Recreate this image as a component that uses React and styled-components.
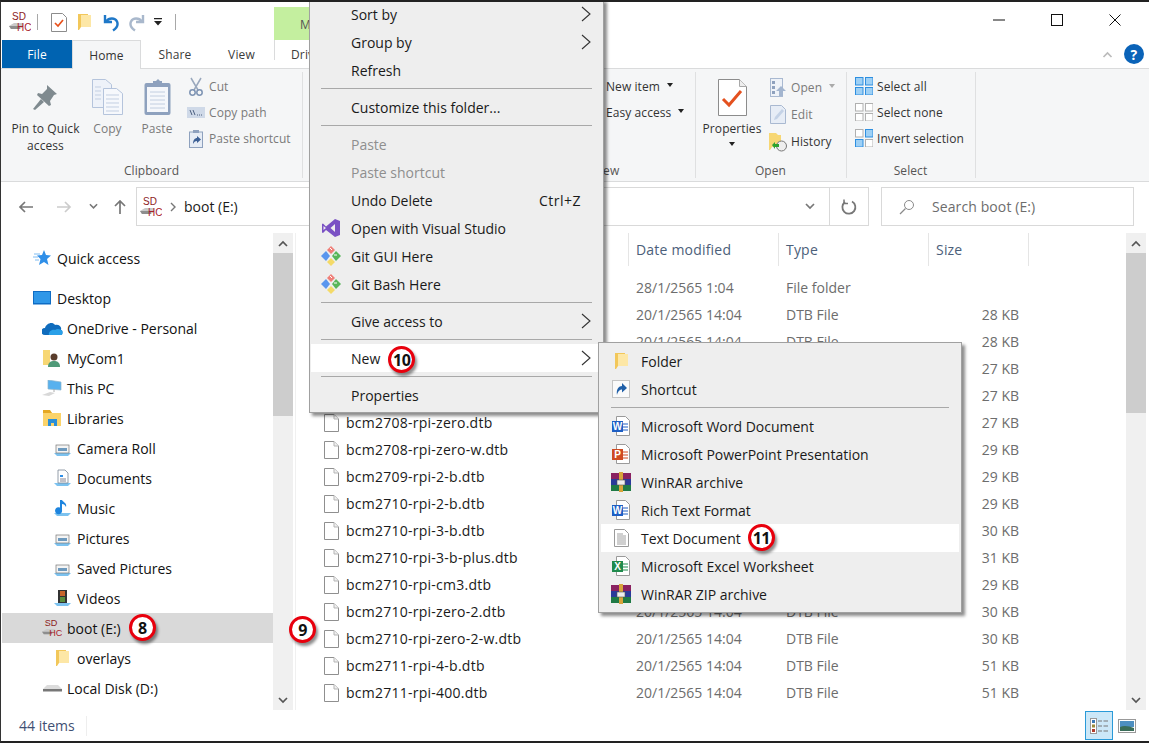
import React from "react";
import styled, { createGlobalStyle } from "styled-components";

const Global = createGlobalStyle`
  html, body { margin: 0; padding: 0; background: #fff; }
  body { font-family: "Open Sans", "Noto Sans", sans-serif; overflow: hidden; }
`;
const Window = styled.div`
  position: relative; width: 1149px; height: 743px; box-sizing: border-box; overflow: hidden;
  border-top: 2px solid #222; border-bottom: 2px solid #222; border-left: 1px solid #333;
  display: flex; flex-direction: column; background: #fff; color: #1a1a1a;
`;
const TitleBar = styled.div`height: 38px; display: flex; align-items: stretch; flex: none;`;
const Qat = styled.div`width: 273px; display: flex; align-items: center; padding: 2px 0 0 8px; box-sizing: border-box; gap: 0;`;
const QatSlot = styled.span`display: inline-flex; justify-content: center; width: ${p => p.$w}px; margin-left: ${p => p.$ml || 0}px;`;
const QatSep = styled.span`width: 1px; height: 16px; background: #a8a8a8; margin-left: ${p => p.$ml}px;`;
const ContextTab = styled.div`
  width: 70px; margin-top: 5px; background: #c4ef9f; font-size: 12px; color: #555; padding: 9px 0 0 26px; box-sizing: border-box;
`;
const WinButtons = styled.div`margin-left: auto; display: flex; margin-right: 5px;`;
const WinButton = styled.div`width: 58px; height: 36px; display: flex; align-items: center; justify-content: center;`;
const TabBar = styled.div`
  height: 28px; flex: none; display: flex; align-items: stretch; border-bottom: 1px solid #dadbdc; padding-left: 1px; box-sizing: content-box; font-size: 12px; letter-spacing: .15px;
`;
const FileTab = styled.div`width: 70px; background: #0063b1; color: #fff; display: flex; align-items: center; justify-content: center;`;
const Tab = styled.div`
  width: ${p => p.$w}px; display: flex; align-items: center; justify-content: center; color: #3b3b3b; box-sizing: border-box;
  ${p => p.$active && `background:#f5f6f7; border:1px solid #dadbdc; border-bottom:none; height:29px; color:#333;`}
`;
const DriveTab = styled.div`width: 70px; border-left: 1px solid #dadbdc; margin: 0 0 8px; padding: 6px 0 0 16px; box-sizing: border-box; color: #3b3b3b;`;
const TabRight = styled.div`margin-left: auto; display: flex; align-items: center; gap: 10px; margin-right: 5px;`;
const Help = styled.div`
  width: 20px; height: 20px; border-radius: 50%; background: #0a63b8; color: #fff; font-weight: 700; font-size: 14px; display: flex; align-items: center; justify-content: center;
`;
const Ribbon = styled.div`
  height: 112px; flex: none; display: flex; background: #f5f6f7; border-bottom: 1px solid #dadbdc; font-size: 12px; letter-spacing: .08px; color: #3b3b3b; padding-left: 1px;
`;
const Group = styled.div`
  width: ${p => p.$w}px; position: relative; display: flex; flex-direction: column; box-sizing: border-box; flex: none;
  &::after{content:"";position:absolute;right:0;top:3px;bottom:3px;width:1px;background:#dfe0e1;}
`;
const GroupBody = styled.div`flex: 1; display: flex; padding-left: ${p => p.$pl || 0}px;`;
const GroupLabel = styled.div`
  height: 21px; line-height: 22px; color: #555; text-align: ${p => p.$pl ? "left" : "center"}; padding-left: ${p => p.$pl || 0}px; padding-right: ${p => p.$pl ? 0 : 2}px;
`;
const BigButton = styled.div`
  width: ${p => p.$w}px; padding-top: 7px; display: flex; flex-direction: column; align-items: center; text-align: center; line-height: 17px; flex: none;
  color: ${p => p.$dim ? "#7a7a7a" : "#333"};
`;
const BigIcon = styled.div`height: 44px; margin-top: -1px; margin-bottom: 1px; display: flex; align-items: center; justify-content: center;`;
const Caret = styled.span`
  display: inline-block; width: 0; height: 0; border-left: 3.5px solid transparent; border-right: 3.5px solid transparent; border-top: 4px solid ${p => p.$c || "#222"};
`;
const CaretRow = styled.div`height: 13px; display: flex; align-items: center;`;
const SmallList = styled.div`display: flex; flex-direction: column; padding-top: ${p => p.$top ?? 4}px; margin-left: ${p => p.$ml || 0}px;`;
const SmallItem = styled.div`
  height: ${p => p.$h || 26}px; display: flex; align-items: center; gap: 4px; white-space: nowrap; color: ${p => p.$dim ? "#7a7a7a" : "#333"};
`;
const SmallIcon = styled.span`width: 18px; display: inline-flex; justify-content: center; flex: none;`;
const CaretGap = styled.span`margin-left: 3px; display: inline-flex; margin-top: -3px;`;
const AddressRow = styled.div`height: 51px; box-sizing: border-box; flex: none; display: flex; align-items: center; padding-bottom: 2px;`;
const NavButtons = styled.div`width: 135px; display: flex; align-items: center; flex: none;`;
const NavBtn = styled.span`width: ${p => p.$w}px; margin-left: ${p => p.$ml || 0}px; display: inline-flex; justify-content: center;`;
const Field = styled.div`
  height: 39px; box-sizing: border-box; border: 1px solid #d9d9d9; display: flex; align-items: center; font-size: 14px; color: #1a1a1a; flex: none;
`;
const AddressField = styled(Field)`width: 733px; padding-left: 3px;`;
const Crumb = styled.span`margin-left: 8px;`;
const Chev = styled.span`margin-left: 8px; display: inline-flex;`;
const FieldEnd = styled.div`margin-left: auto; display: flex; align-items: stretch; height: 100%;`;
const Drop = styled.div`width: 38px; display: flex; align-items: center; justify-content: center;`;
const Refresh = styled.div`width: 38px; border-left: 1px solid #d9d9d9; display: flex; align-items: center; justify-content: center;`;
const SearchField = styled(Field)`width: 253px; margin-left: 12px; color: #6d6d6d; padding-left: 17px; gap: 17px; letter-spacing: .1px;`;
const Body = styled.div`flex: 1; min-height: 0; display: flex; position: relative;`;
const NavPane = styled.div`width: 272px; flex: none; overflow: hidden; padding-top: 10px; box-sizing: border-box; font-size: 14px;`;
const NavRow = styled.div`
  height: 30px; display: flex; align-items: center; box-sizing: border-box; margin-left: 1px; margin-top: ${p => p.$mt || 0}px;
  padding-left: ${p => 28 + p.$level * 10}px; background: ${p => p.$sel ? "#d9d9d9" : "transparent"}; color: #111;
`;
const NavIcon = styled.span`width: 24px; margin-right: 3px; display: inline-flex; justify-content: center; flex: none;`;
const Scroll = styled.div`width: 20px; flex: none; background: #f0f0f0; display: flex; flex-direction: column;`;
const ScrollBtn = styled.div`height: 20px; display: flex; align-items: center; justify-content: center; flex: none;`;
const Thumb = styled.div`height: ${p => p.$h}px; background: #cdcdcd; flex: none;`;
const ScrollFill = styled.div`flex: 1;`;
const FileArea = styled.div`width: 831px; flex: none; margin-left: 2px; border-left: 1px solid #f0f0f0; box-sizing: border-box; display: flex; flex-direction: column; overflow: hidden; font-size: 14px;`;
const cols = "333px 150px 150px 100px";
const Header = styled.div`display: grid; grid-template-columns: ${cols}; height: 32px; flex: none; color: #4c607a; letter-spacing: .2px;`;
const HeadCell = styled.div`border-right: 1px solid #e5e5e5; padding: 0 0 0 7px; line-height: 33px; &:first-child{padding:0;}`;
const Rows = styled.div`padding-top: 9px;`;
const Row = styled.div`display: grid; grid-template-columns: ${cols}; height: 27px; align-items: center; color: #6d6d6d;`;
const NameCell = styled.div`display: flex; align-items: center; padding-left: 28px; gap: 7px; color: #1a1a1a; letter-spacing: .25px;`;
const Cell = styled.div`padding-left: 7px; white-space: nowrap;`;
const SizeCell = styled.div`text-align: right; padding-right: 10px;`;
const StatusBar = styled.div`height: 31px; flex: none; display: flex; align-items: center; font-size: 14px; color: #3f4f73;`;
const StatusText = styled.div`width: 86px; padding-left: 18px; box-sizing: border-box; border-right: 1px solid #eee; line-height: 20px;`;
const ViewBtns = styled.div`margin-left: auto; display: flex; align-items: center; margin-right: 8px;`;
const ViewBtn = styled.div`
  width: 28px; height: 29px; box-sizing: border-box; display: flex; align-items: center; justify-content: center;
  ${p => p.$active && `background:#cce8f8; border:1px solid #2a9ad8;`}
`;
const Menu = styled.div`
  position: absolute; left: ${p => p.$x}px; top: ${p => p.$y}px; width: ${p => p.$w}px; box-sizing: border-box; background: #eee;
  border: 1px solid #a0a0a0; padding: ${p => p.$pad}; box-shadow: 3px 3px 3px rgba(0,0,0,.45); font-size: 14px; color: #1a1a1a; z-index: 5;
`;
const MenuItem = styled.div`
  height: 28px; display: flex; align-items: center; background: ${p => p.$hi ? "#fff" : "transparent"}; color: ${p => p.$off ? "#8f8f8f" : "#1a1a1a"};
`;
const MenuSlot = styled.span`width: 40px; display: inline-flex; justify-content: center; flex: none;`;
const MenuEnd = styled.span`margin-left: auto; margin-right: ${p => p.$r}px; display: inline-flex; letter-spacing: .5px;`;
const MenuSep = styled.div`height: 1px; background: #a8a8a8; margin: 4px 10px;`;
const Badge = styled.span`
  width: 21px; height: 21px; border-radius: 50%; background: #fff; border: 3px solid #e8000d; display: inline-flex; align-items: center; justify-content: center;
  box-shadow: 2px 3px 3px rgba(0,0,0,.45); font: 700 16px/1 "Open Sans", sans-serif; color: #111; flex: none; margin-left: ${p => p.$ml || 0}px; margin-top: ${p => p.$mt || 0}px; letter-spacing: -0.5px;
`;
const FloatBadge = styled(Badge)`position: absolute; left: ${p => p.$x}px; top: ${p => p.$y}px; z-index: 3;`;

const Sd = ({ s = 22 }) => (
  <svg width={s} height={s} viewBox="0 0 22 22">
    <path d="M0 15l5-3h9v4l-3 2H2z" fill="#c9c9c9" /><path d="M0 15h11v3H2z" fill="#8e8e8e" />
    <text x="3" y="9" fontSize="10" fill="#8c1c22" fontFamily="Liberation Sans">SD</text>
    <text x="8" y="19.5" fontSize="10" fill="#a8212b" fontFamily="Liberation Sans">HC</text>
  </svg>
);
const Page = () => (
  <svg width="15" height="18" viewBox="0 0 15 18"><path d="M.5.5h9.500l4.500 4.500v12.500H.5z" fill="#fff" stroke="#8f8f8f" /><path d="M10 .5V5h4.500" fill="#f0f0f0" stroke="#b5b5b5" /></svg>
);
const PropsSmall = () => (
  <svg width="16" height="19" viewBox="0 0 16 19"><path d="M.5.5h11l4 4v14H.5z" fill="#fff" stroke="#8c8c8c" /><path d="M4 10l3 3 5-6" fill="none" stroke="#e8501a" strokeWidth="1.7" /></svg>
);
const Folder = ({ w = 13, h = 18 }) => (
  <svg width={w} height={h} viewBox="0 0 13 18"><path d="M0 1h10v13H3l-2 3H0z" fill="#f2c75a" /><path d="M3 2h10v12H3z" fill="#fde7a6" /></svg>
);
const Undo = ({ c = "#1f78c8" }) => (
  <svg width="17" height="19" viewBox="0 0 17 19"><path d="M2 2v7h7" fill="none" stroke={c} strokeWidth="2.4" /><path d="M3 8.5c3-4 9-4 11 0 1.500 3.500-1 7-4 9" fill="none" stroke={c} strokeWidth="2.4" /></svg>
);
const Arrow = ({ c, rot = 0 }) => (
  <svg width="16" height="16" viewBox="0 0 16 16" style={{ transform: `rotate(${rot}deg)` }}><path d="M1 8h13M9 3l5 5-5 5" fill="none" stroke={c} strokeWidth="1.7" /></svg>
);
const SmallChev = ({ c = "#777", up, w = 10 }) => (
  <svg width={w} height="7" viewBox="0 0 10 7"><path d={up ? "M1 6l4-4 4 4" : "M1 1l4 4 4-4"} fill="none" stroke={c} strokeWidth="1.7" /></svg>
);
const MenuChev = () => (
  <svg width="10" height="16" viewBox="0 0 10 16"><path d="M1 1l8 7-8 7" fill="none" stroke="#333" strokeWidth="1.1" /></svg>
);
const Pin = () => (
  <svg width="28" height="30" viewBox="0 0 28 30"><path d="M15 3l10 9-3 1-4 6 1 4-2 1-12-11 1-2 4 1 5-5z" fill="#7f8a8f" /><path d="M9 17L1 27l2 1 9-8z" fill="#7f8a8f" /></svg>
);
const CopyBig = () => (
  <svg width="31" height="36" viewBox="0 0 31 36">
    <path d="M.5.5h13l6 5v23H.500z" fill="#eef2f9" stroke="#b5c4dc" /><path d="M11.500 9.500h13l6 5v21h-19z" fill="#f6f8fc" stroke="#b5c4dc" />
    <path d="M14 16h13M14 20h13M14 24h13M14 28h13M14 32h13M3 8h6M3 12h6M3 16h6M3 20h6" stroke="#c3cfe2" />
  </svg>
);
const PasteBig = () => (
  <svg width="27" height="37" viewBox="0 0 27 37">
    <rect x=".5" y="4" width="26" height="32" rx="2" fill="#8ea1be" /><rect x="3" y="8" width="21" height="25" fill="#f5f7fb" />
    <path d="M6 13h15M6 17h15M6 21h15M6 25h15M6 29h15" stroke="#c2cee0" /><path d="M9 5h9V2h-2l-2-2-2 2H9z" fill="#8ea1be" />
  </svg>
);
const Scissors = () => (
  <svg width="14" height="19" viewBox="0 0 14 19"><path d="M2 1l7 12M12 1L5 13" stroke="#9aa8bd" strokeWidth="1.5" /><circle cx="3.500" cy="15.500" r="2.700" fill="none" stroke="#7d93b3" strokeWidth="1.500" /><circle cx="10.500" cy="15.500" r="2.700" fill="none" stroke="#7d93b3" strokeWidth="1.500" /></svg>
);
const CopyPath = () => (
  <svg width="18" height="11" viewBox="0 0 18 11"><rect width="18" height="11" fill="#cfd9e8" /><path d="M3 3l2 5M6 3l2 5" stroke="#4d6080" /><path d="M10 8h1M12 8h1M14 8h1" stroke="#4d6080" /></svg>
);
const Shortcut = () => (
  <svg width="14" height="19" viewBox="0 0 14 19"><rect x=".5" y="3" width="13" height="15.500" fill="#e6ecf5" stroke="#8ea1be" /><rect x="4" y="1" width="6" height="3" fill="#8ea1be" /><path d="M4 15c0-4 2-6 4-6V7l4 3.500L8 14v-2c-2 0-3 1-4 3z" fill="#3b5f95" /></svg>
);
const ShortcutBox = () => (
  <svg width="18" height="18" viewBox="0 0 18 18"><rect x=".5" y=".5" width="17" height="17" fill="#fafafa" stroke="#c4c4c4" /><path d="M5 15c-1-6 2-9 5-9V3l5 5-5 4.500V9.500c-2 0-4 1.500-5 5.500z" fill="#1f5fa8" /></svg>
);
const PropsBig = () => (
  <svg width="29" height="37" viewBox="0 0 29 37"><path d="M.5.5h21l7 7v29H.500z" fill="#fff" stroke="#8c8c8c" /><path d="M21.500.5v7h7" fill="#eee" stroke="#a8a8a8" /><path d="M5 20l6 6 12-14" fill="none" stroke="#e4511f" strokeWidth="3" /></svg>
);
const OpenIco = () => (
  <svg width="17" height="19" viewBox="0 0 17 19"><rect x=".5" y=".5" width="12" height="18" fill="#eef2f8" stroke="#a9b9d1" /><path d="M2 3h3v3H2zM2 8h3v3H2zM2 13h3v3H2z" fill="#8ea1be" /><path d="M11 8l5 5h-3v5H9v-5H6z" fill="#a3b5cf" /></svg>
);
const EditIco = () => (
  <svg width="16" height="19" viewBox="0 0 16 19"><path d="M.5.500h11l4 4v14H.500z" fill="#e7edf6" stroke="#a9b9d1" /><path d="M4 15l1-3 7-8 2 2-7 8z" fill="#c4d2e6" /></svg>
);
const HistoryIco = () => (
  <svg width="18" height="20" viewBox="0 0 18 20"><path d="M0 1h7l2 2h3v12H3l-2 3H0z" fill="#f7d774" /><circle cx="12.500" cy="14" r="5" fill="#eee" stroke="#777" /><path d="M3 13l3-3v2h4v3H6v2z" fill="#2fa32f" /></svg>
);
const Grid = ({ on }) => (
  <svg width="18" height="18" viewBox="0 0 18 18">
    {[[0, 0], [10, 0], [0, 10], [10, 10]].map(([x, y], i) => (
      <rect key={i} x={x + .5} y={y + .5} width="7.500" height="7.500" fill={on[i] ? "#9ed0f5" : "#fff"} stroke={on[i] ? "#2e8fe0" : "#b0b0b0"} />
    ))}
  </svg>
);
const Glass = () => (
  <svg width="16" height="16" viewBox="0 0 16 16"><circle cx="10" cy="6" r="4.500" fill="none" stroke="#8a8a8a" /><path d="M6.500 9.500L1 15" stroke="#8a8a8a" strokeWidth="1.300" /></svg>
);
const RefreshIco = () => (
  <svg width="16" height="16" viewBox="0 0 16 16"><path d="M11 2.500A6.500 6.500 0 1 1 4 3" fill="none" stroke="#777" strokeWidth="1.800" /><path d="M3 .5v4h4" fill="none" stroke="#777" strokeWidth="1.500" /></svg>
);
const Star = () => (
  <svg width="18" height="16" viewBox="0 0 18 16"><path d="M11 0l2 5 5 .5-4 3.500 1.500 6L11 12l-5 3 1.500-6L4 5.500 9 5z" fill="#2f8fe8" /><path d="M1 4h6M0 7h5M2 10h4" stroke="#7fbcf2" /></svg>
);
const Monitor = () => (
  <svg width="18" height="14" viewBox="0 0 18 14"><rect x=".5" y=".5" width="17" height="12" fill="#2f97e8" stroke="#0f6cc4" /><path d="M0 13h18" stroke="#0f6cc4" /></svg>
);
const Cloud = () => (
  <svg width="21" height="13" viewBox="0 0 21 13"><path d="M3 13a3.500 3.500 0 0 1 0-7c1-4 7-7 10-3 4-1 7 2 6 5 2 0 2 5 0 5z" fill="#0f6cbd" /><path d="M7 13c-1-3 3-6 6-5 3-2 6 0 6 0 2 0 2 5 0 5z" fill="#2aa0e8" /></svg>
);
const UserF = () => (
  <svg width="18" height="19" viewBox="0 0 18 19"><path d="M0 1h7v15H0z" fill="#f7d774" /><circle cx="11" cy="8" r="3.500" fill="#5a3d2c" /><path d="M5 18c0-5 3-6 6-6s6 1 6 6z" fill="#4f9a78" /></svg>
);
const Pc = () => (
  <svg width="20" height="17" viewBox="0 0 20 17"><path d="M6 0l13 2v8L6 9z" fill="#58b1ee" stroke="#8db4cc" strokeWidth=".7" /><path d="M0 15l8-3 5 1-6 3z" fill="#d8d8d8" /><path d="M12 9v3" stroke="#aaa" /></svg>
);
const Lib = () => (
  <svg width="19" height="16" viewBox="0 0 19 16"><path d="M0 1h7l2 2h9v13H0z" fill="#fbd36a" /><path d="M0 0h7l2 3H0z" fill="#e5a823" /><path d="M5 16v-7h9v7h-3v-3H8v3z" fill="#2a8fd8" /></svg>
);
const LibItem = ({ kind }) => (
  <svg width="19" height="18" viewBox="0 0 19 18">
    <path d="M1 14h17l-3 3H4z" fill="#7cc2ef" />
    {kind === "pic" && <><rect x="3" y="6" width="13" height="8" fill="#f4f4f4" stroke="#777" strokeWidth=".7" /><path d="M5 9h9v3H5z" fill="#6d99bd" /></>}
    {kind === "doc" && <><path d="M5 1h7l3 3v10H5z" fill="#fff" stroke="#7a8796" strokeWidth=".8" /><path d="M7 6h3v2H7z" fill="#2f8fe8" /><path d="M7 10h6M7 12h6" stroke="#667" strokeWidth=".8" /></>}
    {kind === "music" && <path d="M9 1v10a3.500 3.500 0 1 1-2-2.500V1h2zM9 1c2 3 5 3 4 7-1-2-2-3-4-3z" fill="#1d84de" />}
    {kind === "vid" && <><rect x="5" y="1" width="9" height="13" fill="#333" /><path d="M7 2h5v5H7z" fill="#c8652c" /><path d="M7 8h5v5H7z" fill="#5a8e3e" /></>}
  </svg>
);
const Disk = () => (
  <svg width="19" height="10" viewBox="0 0 19 10"><path d="M0 6l4-4h11l4 4z" fill="#dcdcdc" /><path d="M0 6h19v2.500H0z" fill="#777" /></svg>
);
const VsIco = () => (
  <svg width="20" height="20" viewBox="0 0 20 20"><path d="M14 1l5 2v14l-5 2L5 12l-3 3-1-.5V6l1-.5 3 3z" fill="#7a51c4" /><path d="M14 6v8l-4.500-4z" fill="#eee" /><path d="M2.500 8v4L5 10z" fill="#eee" /></svg>
);
const GitIco = () => (
  <svg width="20" height="20" viewBox="0 0 20 20">
    <path d="M10 0l4 4-4 4-4-4z" fill="#ef7f78" /><path d="M5 5l4 5-4 5-5-5z" fill="#5a96ee" /><path d="M15 5l5 5-5 5-4-5z" fill="#58b65a" /><path d="M10 12l4 4-4 4-4-4z" fill="#f4da68" />
    <path d="M9 2l2 2M13 9h3" stroke="#fff" />
  </svg>
);
const Office = ({ letter, c }) => (
  <svg width="18" height="20" viewBox="0 0 18 20">
    <path d="M4.500.5h9l4 4v15h-13z" fill="#fff" stroke="#9a9a9a" />
    <path d="M11 8h5M11 11h5M11 14h5" stroke={c} />
    <rect x="0" y="5" width="11" height="11" fill={c} />
    <text x="5.500" y="14" fontSize="10" fontWeight="700" fill="#fff" textAnchor="middle" fontFamily="Liberation Sans">{letter}</text>
  </svg>
);
const Rar = () => (
  <svg width="20" height="20" viewBox="0 0 20 20">
    <rect y="1" width="20" height="6" fill="#8a2160" /><rect y="7" width="20" height="6" fill="#2a3a9a" /><rect y="13" width="20" height="6" fill="#1f7a45" />
    <rect x="8" width="4" height="20" fill="#d8a33a" /><rect x="6" y="8" width="8" height="5" fill="#eee" stroke="#555" strokeWidth=".6" />
  </svg>
);
const TextIco = () => (
  <svg width="15" height="18" viewBox="0 0 15 18"><path d="M.5.500h10l4 4v13H.500z" fill="#fff" stroke="#9a9a9a" /><path d="M3 5h6M3 7h9M3 9h9M3 11h9M3 13h9M3 15h9" stroke="#a0a0a0" /></svg>
);
const DetailsIco = () => (
  <svg width="19" height="16" viewBox="0 0 19 16">
    <rect x=".5" y=".5" width="6" height="15" fill="#fff" stroke="#999" /><rect x="2" y="2" width="3" height="3" fill="#3b78b5" /><rect x="2" y="6.500" width="3" height="3" fill="#9a8a3a" /><rect x="2" y="11" width="3" height="3" fill="#b03a2a" />
    <path d="M8 3h4M13.500 3H18M8 8h4M13.500 8H18M8 13h4M13.500 13H18" stroke="#777" />
  </svg>
);
const LargeIco = () => (
  <svg width="18" height="14" viewBox="0 0 18 14"><rect x=".5" y=".5" width="17" height="13" fill="#fff" stroke="#999" /><path d="M2 2h14v6H2z" fill="#4d8fc0" /><path d="M2 8c4-2 9-1 14 1v3H2z" fill="#3a6d58" /></svg>
);

const navItems = [
  ["Quick access", 0, <Star />],
  ["Desktop", 0, <Monitor />, 10],
  ["OneDrive - Personal", 1, <Cloud />],
  ["MyCom1", 1, <UserF />],
  ["This PC", 1, <Pc />],
  ["Libraries", 1, <Lib />],
  ["Camera Roll", 2, <LibItem kind="pic" />],
  ["Documents", 2, <LibItem kind="doc" />],
  ["Music", 2, <LibItem kind="music" />],
  ["Pictures", 2, <LibItem kind="pic" />],
  ["Saved Pictures", 2, <LibItem kind="pic" />],
  ["Videos", 2, <LibItem kind="vid" />],
];
const D = "20/1/2565 14:04";
const files = [
  ["overlays", "28/1/2565 1:04", "File folder", ""],
  ["bcm2708-rpi-b.dtb", D, "DTB File", "28 KB"],
  ["bcm2708-rpi-b-plus.dtb", D, "DTB File", "28 KB"],
  ["bcm2708-rpi-cm.dtb", D, "DTB File", "27 KB"],
  ["bcm2708-rpi-b-rev1.dtb", D, "DTB File", "27 KB"],
  ["bcm2708-rpi-zero.dtb", D, "DTB File", "27 KB"],
  ["bcm2708-rpi-zero-w.dtb", D, "DTB File", "29 KB"],
  ["bcm2709-rpi-2-b.dtb", D, "DTB File", "29 KB"],
  ["bcm2710-rpi-2-b.dtb", D, "DTB File", "29 KB"],
  ["bcm2710-rpi-3-b.dtb", D, "DTB File", "30 KB"],
  ["bcm2710-rpi-3-b-plus.dtb", D, "DTB File", "31 KB"],
  ["bcm2710-rpi-cm3.dtb", D, "DTB File", "29 KB"],
  ["bcm2710-rpi-zero-2.dtb", D, "DTB File", "30 KB"],
  ["bcm2710-rpi-zero-2-w.dtb", D, "DTB File", "30 KB"],
  ["bcm2711-rpi-4-b.dtb", D, "DTB File", "51 KB"],
  ["bcm2711-rpi-400.dtb", D, "DTB File", "51 KB"],
  ["bcm2711-rpi-cm4.dtb", D, "DTB File", "51 KB"],
];

export default function App() {
  return (
    <Window>
      <Global />
      <TitleBar>
        <Qat>
          <Sd />
          <QatSep $ml={6} />
          <QatSlot $w={20} $ml={11}><PropsSmall /></QatSlot>
          <QatSlot $w={16} $ml={7}><Folder /></QatSlot>
          <QatSlot $w={18} $ml={10}><Undo /></QatSlot>
          <QatSlot $w={18} $ml={7}><svg width="17" height="19" style={{ transform: "scaleX(-1)" }} viewBox="0 0 17 19"><path d="M2 2v7h7" fill="none" stroke="#a9b8cc" strokeWidth="2.400" /><path d="M3 8.500c3-4 9-4 11 0 1.500 3.500-1 7-4 9" fill="none" stroke="#a9b8cc" strokeWidth="2.400" /></svg></QatSlot>
          <QatSlot $w={10} $ml={8}><svg width="8" height="8" viewBox="0 0 8 8"><path d="M0 0h8v1.200H0zM0 3h8L4 7.500z" fill="#222" /></svg></QatSlot>
          <QatSep $ml={12} />
        </Qat>
        <ContextTab>M</ContextTab>
        <WinButtons>
          <WinButton><svg width="12" height="2" viewBox="0 0 12 2"><path d="M0 1h12" stroke="#111" /></svg></WinButton>
          <WinButton><svg width="12" height="12" viewBox="0 0 12 12"><rect x=".5" y=".5" width="11" height="11" fill="none" stroke="#111" /></svg></WinButton>
          <WinButton><svg width="12" height="12" viewBox="0 0 12 12"><path d="M.5.500l11 11M11.500.500l-11 11" stroke="#111" /></svg></WinButton>
        </WinButtons>
      </TitleBar>
      <TabBar>
        <FileTab>File</FileTab>
        <Tab $w={69} $active>Home</Tab>
        <Tab $w={68}>Share</Tab>
        <Tab $w={65}>View</Tab>
        <DriveTab>Drive</DriveTab>
        <TabRight>
          <SmallChev c="#bbb" up w={13} />
          <Help>?</Help>
        </TabRight>
      </TabBar>
      <Ribbon>
        <Group $w={301}>
          <GroupBody $pl={6}>
            <BigButton $w={75}><BigIcon><Pin /></BigIcon>Pin to Quick<br />access</BigButton>
            <BigButton $w={49} $dim><BigIcon><CopyBig /></BigIcon>Copy</BigButton>
            <BigButton $w={50} $dim><BigIcon><PasteBig /></BigIcon>Paste</BigButton>
            <SmallList $ml={5}>
              <SmallItem $dim><SmallIcon><Scissors /></SmallIcon>Cut</SmallItem>
              <SmallItem $dim><SmallIcon><CopyPath /></SmallIcon>Copy path</SmallItem>
              <SmallItem $dim><SmallIcon><Shortcut /></SmallIcon>Paste shortcut</SmallItem>
            </SmallList>
          </GroupBody>
          <GroupLabel>Clipboard</GroupLabel>
        </Group>
        <Group $w={393}>
          <GroupBody $pl={303}>
            <SmallList>
              <SmallItem>New item<CaretGap><Caret /></CaretGap></SmallItem>
              <SmallItem>Easy access<CaretGap><Caret /></CaretGap></SmallItem>
            </SmallList>
          </GroupBody>
          <GroupLabel $pl={291}>New</GroupLabel>
        </Group>
        <Group $w={151}>
          <GroupBody $pl={2}>
            <BigButton $w={68}><BigIcon><PropsBig /></BigIcon>Properties<CaretRow><Caret /></CaretRow></BigButton>
            <SmallList $top={5} $ml={3}>
              <SmallItem $h={27} $dim><SmallIcon><OpenIco /></SmallIcon>Open<CaretGap><Caret $c="#aaa" /></CaretGap></SmallItem>
              <SmallItem $h={27} $dim><SmallIcon><EditIco /></SmallIcon>Edit</SmallItem>
              <SmallItem $h={27}><SmallIcon><HistoryIco /></SmallIcon>History</SmallItem>
            </SmallList>
          </GroupBody>
          <GroupLabel>Open</GroupLabel>
        </Group>
        <Group $w={129}>
          <GroupBody $pl={8}>
            <SmallList>
              <SmallItem><SmallIcon><Grid on={[1, 1, 1, 1]} /></SmallIcon>Select all</SmallItem>
              <SmallItem><SmallIcon><Grid on={[0, 0, 0, 0]} /></SmallIcon>Select none</SmallItem>
              <SmallItem><SmallIcon><Grid on={[0, 1, 1, 0]} /></SmallIcon>Invert selection</SmallItem>
            </SmallList>
          </GroupBody>
          <GroupLabel>Select</GroupLabel>
        </Group>
      </Ribbon>
      <AddressRow>
        <NavButtons>
          <NavBtn $w={16} $ml={17}><Arrow c="#777" rot={180} /></NavBtn>
          <NavBtn $w={16} $ml={22}><Arrow c="#ccc" /></NavBtn>
          <NavBtn $w={10} $ml={16}><SmallChev w={9} /></NavBtn>
          <NavBtn $w={16} $ml={14}><Arrow c="#777" rot={-90} /></NavBtn>
        </NavButtons>
        <AddressField>
          <Sd />
          <Chev><svg width="6" height="10" viewBox="0 0 6 10"><path d="M1 1l4 4-4 4" fill="none" stroke="#777" strokeWidth="1.400" /></svg></Chev>
          <Crumb>boot (E:)</Crumb>
          <FieldEnd>
            <Drop><SmallChev w={12} /></Drop>
            <Refresh><RefreshIco /></Refresh>
          </FieldEnd>
        </AddressField>
        <SearchField><Glass />Search boot (E:)</SearchField>
      </AddressRow>
      <Body>
        <NavPane>
          {navItems.map(([t, l, ic, mt]) => (
            <NavRow key={t} $level={l} $mt={mt}><NavIcon>{ic}</NavIcon>{t}</NavRow>
          ))}
          <NavRow $level={1} $sel><NavIcon><Sd s={20} /></NavIcon>boot (E:)<Badge $ml={8} $mt={-1}>8</Badge></NavRow>
          <NavRow $level={2}><NavIcon><Folder /></NavIcon>overlays</NavRow>
          <NavRow $level={1}><NavIcon><Disk /></NavIcon>Local Disk (D:)</NavRow>
        </NavPane>
        <Scroll>
          <ScrollBtn><SmallChev c="#555" up /></ScrollBtn>
          <Thumb $h={163} />
          <ScrollFill />
          <ScrollBtn><SmallChev c="#555" /></ScrollBtn>
        </Scroll>
        <FileArea>
          <Header>
            <HeadCell />
            <HeadCell>Date modified</HeadCell>
            <HeadCell>Type</HeadCell>
            <HeadCell>Size</HeadCell>
          </Header>
          <Rows>
            {files.map(f => (
              <Row key={f[0]}>
                <NameCell><Page />{f[0]}</NameCell>
                <Cell>{f[1]}</Cell>
                <Cell>{f[2]}</Cell>
                <SizeCell>{f[3]}</SizeCell>
              </Row>
            ))}
          </Rows>
        </FileArea>
        <Scroll>
          <ScrollBtn><SmallChev c="#555" up /></ScrollBtn>
          <Thumb $h={160} />
          <ScrollFill />
          <ScrollBtn><SmallChev c="#555" /></ScrollBtn>
        </Scroll>
        <FloatBadge $x={288} $y={383}>9</FloatBadge>
      </Body>
      <StatusBar>
        <StatusText>44 items</StatusText>
        <ViewBtns>
          <ViewBtn $active><DetailsIco /></ViewBtn>
          <ViewBtn><LargeIco /></ViewBtn>
        </ViewBtns>
      </StatusBar>
      <Menu $x={308} $y={-3} $w={295} $pad="0 1px 3px">
        <MenuItem><MenuSlot />Sort by<MenuEnd $r={11}><MenuChev /></MenuEnd></MenuItem>
        <MenuItem><MenuSlot />Group by<MenuEnd $r={11}><MenuChev /></MenuEnd></MenuItem>
        <MenuItem><MenuSlot />Refresh</MenuItem>
        <MenuSep />
        <MenuItem><MenuSlot />Customize this folder...</MenuItem>
        <MenuSep />
        <MenuItem $off><MenuSlot />Paste</MenuItem>
        <MenuItem $off><MenuSlot />Paste shortcut</MenuItem>
        <MenuItem><MenuSlot />Undo Delete<MenuEnd $r={21}>Ctrl+Z</MenuEnd></MenuItem>
        <MenuItem><MenuSlot><VsIco /></MenuSlot>Open with Visual Studio</MenuItem>
        <MenuItem><MenuSlot><GitIco /></MenuSlot>Git GUI Here</MenuItem>
        <MenuItem><MenuSlot><GitIco /></MenuSlot>Git Bash Here</MenuItem>
        <MenuSep />
        <MenuItem><MenuSlot />Give access to<MenuEnd $r={11}><MenuChev /></MenuEnd></MenuItem>
        <MenuSep />
        <MenuItem $hi><MenuSlot />New<Badge $ml={8} $mt={3}>10</Badge><MenuEnd $r={11}><MenuChev /></MenuEnd></MenuItem>
        <MenuSep />
        <MenuItem><MenuSlot />Properties</MenuItem>
      </Menu>
      <Menu $x={597} $y={340} $w={364} $pad="4px 2px">
        <MenuItem><MenuSlot><Folder w={15} h={18} /></MenuSlot>Folder</MenuItem>
        <MenuItem><MenuSlot><ShortcutBox /></MenuSlot>Shortcut</MenuItem>
        <MenuSep />
        <MenuItem><MenuSlot><Office letter="W" c="#1e5fc4" /></MenuSlot>Microsoft Word Document</MenuItem>
        <MenuItem><MenuSlot><Office letter="P" c="#cf4a22" /></MenuSlot>Microsoft PowerPoint Presentation</MenuItem>
        <MenuItem><MenuSlot><Rar /></MenuSlot>WinRAR archive</MenuItem>
        <MenuItem><MenuSlot><Office letter="W" c="#1e5fc4" /></MenuSlot>Rich Text Format</MenuItem>
        <MenuItem $hi><MenuSlot><TextIco /></MenuSlot>Text Document<Badge $ml={7} $mt={-1}>11</Badge></MenuItem>
        <MenuItem><MenuSlot><Office letter="X" c="#1f8a4c" /></MenuSlot>Microsoft Excel Worksheet</MenuItem>
        <MenuItem><MenuSlot><Rar /></MenuSlot>WinRAR ZIP archive</MenuItem>
      </Menu>
    </Window>
  );
}
